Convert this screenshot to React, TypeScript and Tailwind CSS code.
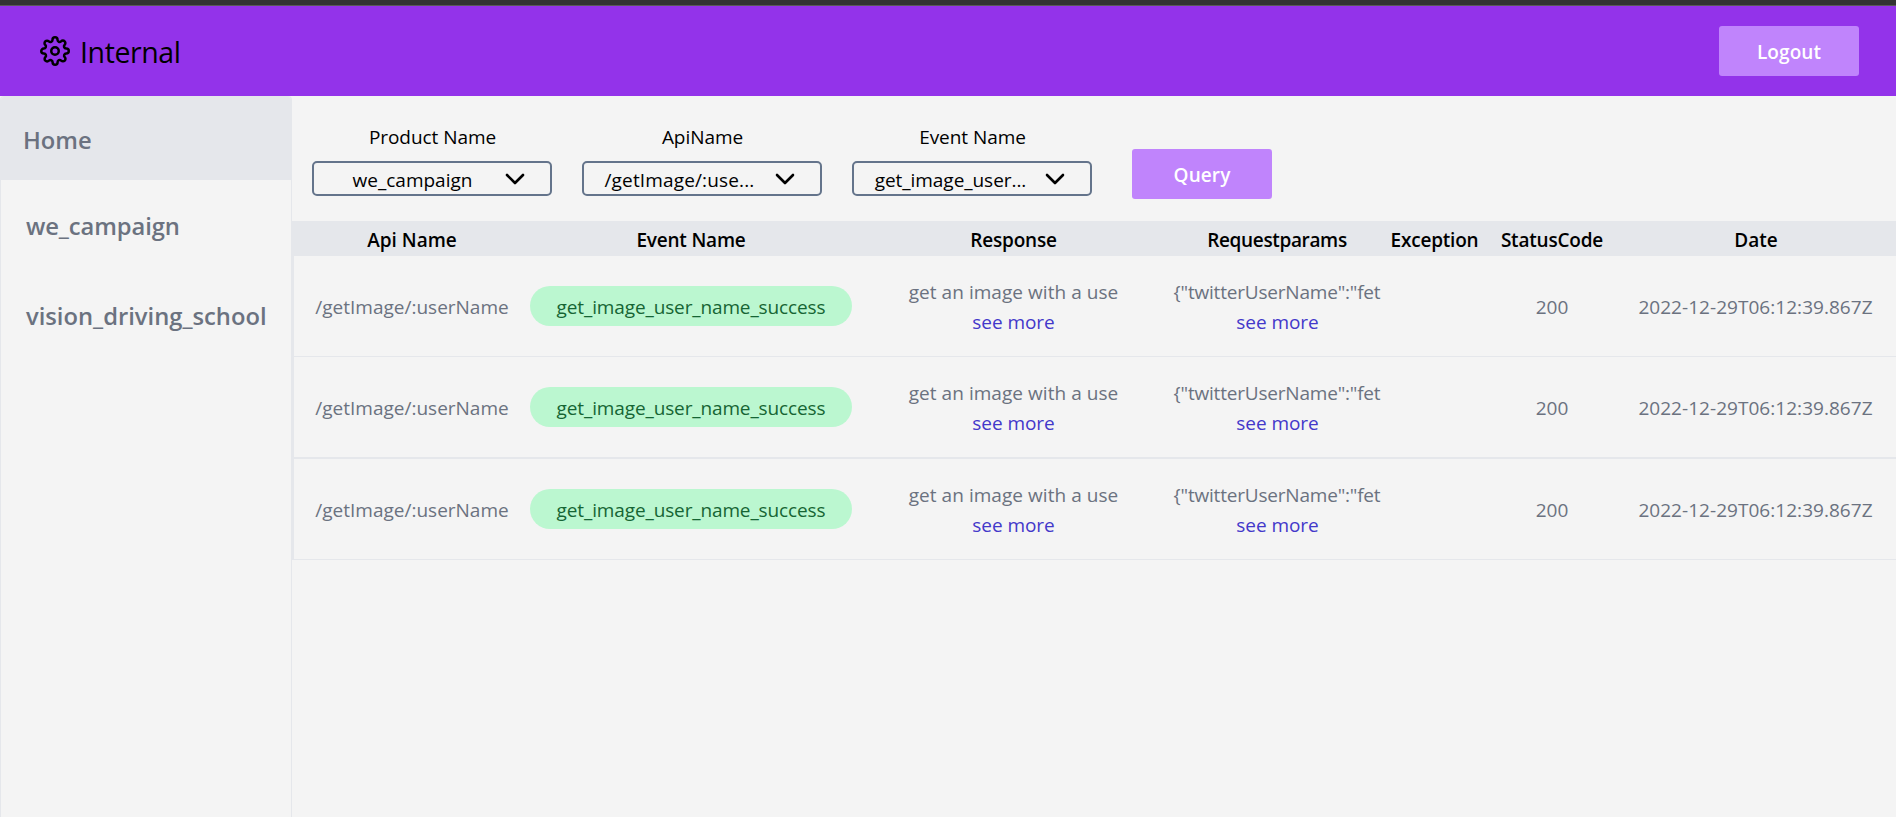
import { FiSettings } from "react-icons/fi";
import type { ReactNode } from "react";

const FILTERS = [
  { label: "Product Name", value: "we_campaign", valueCls: "w-[197px]" },
  { label: "ApiName", value: "/getImage/:use...", valueCls: "w-[191px] tracking-[0.15px]" },
  { label: "Event Name", value: "get_image_user...", valueCls: "w-[193px] tracking-[-0.05px]" },
];

const COLUMNS = [
  { name: "Api Name", cls: "" },
  { name: "Event Name", cls: "tracking-[-0.2px]" },
  { name: "Response", cls: "pl-px tracking-[-0.2px]" },
  { name: "Requestparams", cls: "tracking-[-0.35px]" },
  { name: "Exception", cls: "tracking-[-0.2px]" },
  { name: "StatusCode", cls: "tracking-[-0.2px]" },
  { name: "Date", cls: "pl-px" },
];

const ROW = {
  api: "/getImage/:userName",
  event: "get_image_user_name_success",
  response: "get an image with a use",
  request: '{"twitterUserName":"fet',
  status: "200",
  date: "2022-12-29T06:12:39.867Z",
};

const ROWS = [
  { ...ROW, cls: "h-[101px] border-b" },
  { ...ROW, cls: "h-[102px] border-b-2" },
  { ...ROW, cls: "h-[101px] border-b" },
];

const GRID = "grid grid-cols-[236px_322px_322px_206px_109px_126px_281px]";

function Button({ children }: { children: ReactNode }) {
  return (
    <button className="flex h-[50px] w-[140px] items-center justify-center rounded-[3px] bg-[#c084fc] pt-[3px] font-semibold tracking-[0.1px] text-white">
      {children}
    </button>
  );
}

function Chevron() {
  return (
    <svg viewBox="0 0 20 12" className="mt-px h-3 w-5" fill="none" stroke="currentColor" strokeWidth="2.6">
      <path d="M2 2l8 8 8-8" strokeLinecap="round" strokeLinejoin="round" />
    </svg>
  );
}

function Preview({ text, cls }: { text: string; cls: string }) {
  return (
    <div className="flex flex-col items-center pt-0.5 leading-[30px]">
      <span className={cls}>{text}</span>
      <span className="pl-px tracking-[-0.05px] text-[#4338ca]">see more</span>
    </div>
  );
}

export default function App() {
  return (
    <div className="flex h-[817px] w-[1896px] flex-col overflow-hidden bg-[#f4f4f4] font-['Open_Sans','Noto_Sans',sans-serif] text-[19px] whitespace-nowrap text-black">
      <div className="h-[6px] shrink-0 border-b border-[#5a5a5a] bg-[#333333]" />
      <header className="flex h-[90px] shrink-0 items-center justify-between bg-[#9333ea] pr-[37px] pl-10">
        <div className="flex items-center gap-2.5">
          <FiSettings className="size-[30px]" />
          <span className="pt-[3px] text-[28.5px] tracking-[-0.4px]">Internal</span>
        </div>
        <Button>Logout</Button>
      </header>
      <div className="flex grow">
        <nav className="w-[292px] shrink-0 rounded-t-[4px] border border-b-0 border-[#e5e7eb] text-[23.75px] font-semibold text-[#6b7280]">
          <div className="flex h-[83px] items-center rounded-t-[3px] bg-[#e5e7eb] pt-1 pl-[22px]">Home</div>
          <div className="flex h-[90px] items-center pt-1 pl-[25px] tracking-[-0.1px]">we_campaign</div>
          <div className="flex h-[90px] items-center pt-1 pl-[25px]">vision_driving_school</div>
        </nav>
        <main className="w-[1604px] shrink-0">
          <div className="flex h-[125px] pl-5">
            {FILTERS.map((f) => (
              <div key={f.label} className="mr-[30px] flex w-[240px] flex-col items-center pt-[26px]">
                <span className="h-[39px] pl-px leading-[30px] tracking-[-0.05px]">{f.label}</span>
                <div className="flex h-[35px] w-[240px] items-center justify-between rounded-[5px] border-2 border-[#64748b] pr-[25px]">
                  <span className={`pt-[3px] text-center ${f.valueCls}`}>{f.value}</span>
                  <span className="-ml-5">
                    <Chevron />
                  </span>
                </div>
              </div>
            ))}
            <div className="pt-[53px] pl-2.5">
              <Button>Query</Button>
            </div>
          </div>
          <div className={`h-[35px] items-center bg-[#e5e7eb] pt-1 pl-0.5 text-center font-semibold ${GRID}`}>
            {COLUMNS.map((c) => (
              <span key={c.name} className={c.cls}>
                {c.name}
              </span>
            ))}
          </div>
          {ROWS.map((r, i) => (
            <div key={i} className={`items-center border-l-2 border-[#e5e7eb] text-center text-[#6b7280] ${GRID} ${r.cls}`}>
              <span className="pt-[3px]">{r.api}</span>
              <span className="flex h-10 items-center justify-center rounded-full bg-[#bbf7d0] pt-[3px] tracking-[-0.13px] text-[#166534]">
                {r.event}
              </span>
              <Preview text={r.response} cls="pl-px tracking-[0.05px]" />
              <Preview text={r.request} cls="tracking-[-0.2px]" />
              <span />
              <span className="pt-[3px]">{r.status}</span>
              <span className="pt-[3px] tracking-[0.04px]">{r.date}</span>
            </div>
          ))}
        </main>
      </div>
    </div>
  );
}
